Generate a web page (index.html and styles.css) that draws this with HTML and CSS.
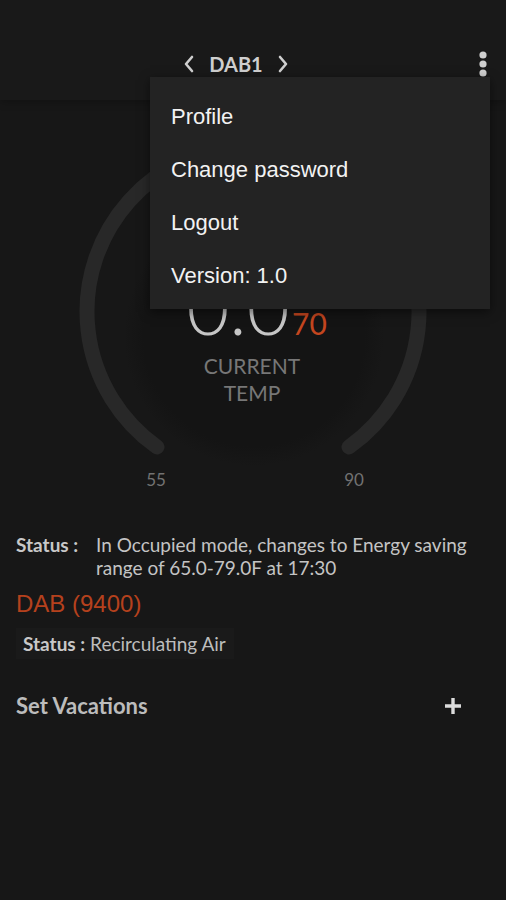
FILE: index.html
```html
<!DOCTYPE html>
<html lang="en">

<head>
    <meta charset="UTF-8">
    <meta name="viewport" content="width=device-width, initial-scale=1.0">
    <title>DAB1</title>
    <link rel="stylesheet" href="styles.css">
</head>

<body>
    <header class="topbar">
        <div class="zone-nav">
            <svg class="chev" width="12" height="18" viewBox="0 0 12 18"><polyline points="9,2 3,9 9,16" /></svg>
            <span class="zone-name">DAB1</span>
            <svg class="chev" width="12" height="18" viewBox="0 0 12 18"><polyline points="3,2 9,9 3,16" /></svg>
        </div>
        <svg class="more" width="10" height="26" viewBox="0 0 10 26">
            <circle cx="5" cy="4" r="3.6" />
            <circle cx="5" cy="13" r="3.6" />
            <circle cx="5" cy="22" r="3.6" />
        </svg>
    </header>

    <section class="gauge">
        <svg width="506" height="400" viewBox="0 0 506 400">
            <defs>
                <radialGradient id="disc">
                    <stop offset="0.85" stop-color="#141414" />
                    <stop offset="1" stop-color="#171717" />
                </radialGradient>
            </defs>
            <circle cx="254" cy="236" r="130" fill="url(#disc)" />
            <path class="track" d="M157 347 A166 166 0 1 1 349 347" />
            <text class="temp" x="238" y="235">0.0</text>
            <text class="setpoint" x="292" y="235">70</text>
            <text class="caption" x="252" y="274">CURRENT</text>
            <text class="caption" x="252" y="301">TEMP</text>
            <text class="limit" x="156" y="386">55</text>
            <text class="limit" x="354" y="386">90</text>
        </svg>
    </section>

    <section class="info">
        <div class="status-row">
            <span class="label">Status :</span>
            <span class="status-text">In Occupied mode, changes to Energy saving range of 65.0-79.0F at 17:30</span>
        </div>
        <div class="unit-name">DAB (9400)</div>
        <div class="unit-status"><b>Status :</b> Recirculating Air</div>
        <div class="vacations">
            <span>Set Vacations</span>
            <svg width="18" height="18" viewBox="0 0 18 18"><path d="M9 1V17M1 9H17" /></svg>
        </div>
    </section>

    <ul class="menu">
        <li>Profile</li>
        <li>Change password</li>
        <li>Logout</li>
        <li>Version: 1.0</li>
    </ul>
</body>

</html>
```

FILE: styles.css
```css
body {
    margin: 0;
    background-color: #171717;
    font-family: Lato, "Open Sans", sans-serif;
    color: #c8c8c8;
}

.topbar {
    height: 100px;
    background-color: #191919;
    box-shadow: 0 2px 8px rgba(0, 0, 0, 0.25);
    display: flex;
    align-items: flex-end;
    justify-content: center;
    position: relative;
}

.zone-nav {
    display: flex;
    align-items: center;
    gap: 14px;
    margin-bottom: 24px;
    margin-right: 34px;
}

.zone-name {
    font-weight: bold;
    font-size: 20px;
    color: #cfcfcf;
}

.chev polyline {
    fill: none;
    stroke: #cfcfcf;
    stroke-width: 2.6;
    stroke-linecap: round;
    stroke-linejoin: round;
}

.more {
    position: absolute;
    right: 18px;
    top: 51px;
    fill: #cfcfcf;
}

.gauge svg {
    display: block;
}

.track {
    fill: none;
    stroke: #282828;
    stroke-width: 15;
    stroke-linecap: round;
}

.temp {
    font-family: Lato, sans-serif;
    font-weight: 300;
    font-size: 74px;
    fill: #c6c6c6;
    text-anchor: middle;
}

.setpoint {
    font-size: 30px;
    fill: #c4461f;
}

.caption {
    font-size: 21px;
    fill: #777;
    text-anchor: middle;
}

.limit {
    font-size: 17px;
    fill: #727272;
    text-anchor: middle;
}

.info {
    padding: 33px 16px 0;
}

.status-row {
    display: grid;
    grid-template-columns: 80px 1fr;
    font-size: 19px;
    line-height: 23px;
    color: #c4c4c4;
}

.label,
.unit-status b {
    font-weight: bold;
    color: #c8c8c8;
}

.unit-name {
    font-family: "Liberation Sans", Arial, sans-serif;
    font-size: 24px;
    line-height: 28px;
    color: #b5411d;
    margin-top: 11px;
}

.unit-status {
    display: inline-block;
    margin-top: 10px;
    padding: 4px 8px 4px 7px;
    background-color: #1a1a1a;
    font-size: 19px;
    line-height: 23px;
    color: #bdbdbd;
}

.vacations {
    display: flex;
    justify-content: space-between;
    align-items: center;
    margin-top: 34px;
    padding-right: 28px;
    font-size: 22px;
    line-height: 26px;
    font-weight: bold;
    color: #bcbcbc;
}

.vacations path {
    stroke: #dcdcdc;
    stroke-width: 3.4;
}

.menu {
    position: absolute;
    top: 77px;
    left: 150px;
    width: 340px;
    margin: 0;
    padding: 13px 0 7px;
    list-style: none;
    background-color: #232323;
    box-shadow: 0 3px 10px rgba(0, 0, 0, 0.5);
    font-family: "Liberation Sans", Arial, sans-serif;
    font-size: 22px;
    color: #f2f2f2;
}

.menu li {
    height: 53px;
    line-height: 53px;
    padding-left: 21px;
}
```
